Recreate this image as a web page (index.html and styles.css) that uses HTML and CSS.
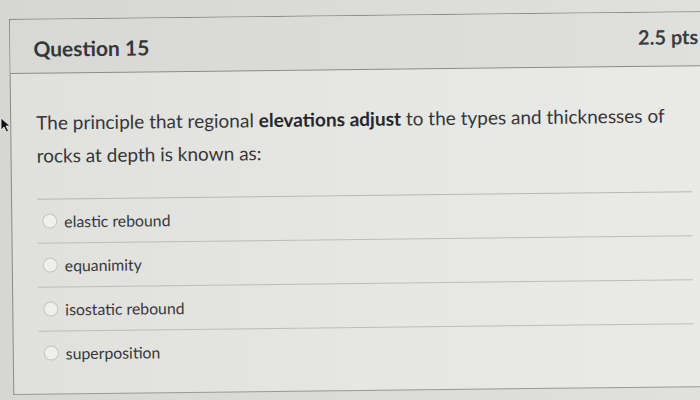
FILE: index.html
```html
<!DOCTYPE html>
<html>
<head>
<meta charset="utf-8">
<link rel="stylesheet" href="styles.css">
</head>
<body>
<div class="card">
  <div class="head">
    <span class="title">Question 15</span>
    <span class="pts">2.5 pts</span>
  </div>
  <div class="body">
    <p class="q">The principle that regional <b>elevations adjust</b> to the types and thicknesses of rocks at depth is known as:</p>
    <ul class="opts">
      <li><span class="radio"></span>elastic rebound</li>
      <li><span class="radio"></span>equanimity</li>
      <li><span class="radio"></span>isostatic rebound</li>
      <li><span class="radio"></span>superposition</li>
    </ul>
  </div>
</div>
<svg class="cursor" width="12" height="16" viewBox="0 0 12 16"><path d="M1 1 L1 13 L4 10 L6.5 15 L8.5 14 L6 9 L10 9 Z" fill="#111" stroke="#eee" stroke-width="0.8"/></svg>
</body>
</html>
```
FILE: styles.css
```css
html, body {
  margin: 0;
  padding: 0;
  width: 700px;
  height: 400px;
  overflow: hidden;
}
body {
  background: linear-gradient(to right, #d6d6d2, #dcdcd8 60%, #e0e0dc);
  font-family: Lato, "Open Sans", sans-serif;
  color: #2e3135;
  position: relative;
}
.card {
  margin: 19px 0 0 9px;
  width: 720px;
  height: 374px;
  border-top: 1px solid #8b8b87;
  border-left: 1px solid #8b8b87;
  border-bottom: 1px solid #9a9a96;
  transform: rotate(-0.65deg);
  transform-origin: top left;
  background: linear-gradient(to right, #e0e0dc, #e6e6e2 50%, #eaeae6);
}
.head {
  height: 53px;
  border-bottom: 1px solid #8b8b87;
  display: flex;
  align-items: center;
  justify-content: space-between;
  padding: 0 32px 0 23px;
  background: linear-gradient(to right, #d8d8d4, #dcdcd8 60%, #e0e0dc);
}
.title {
  font-size: 21px;
  font-weight: 700;
  color: #34373a;
  margin-top: 4px;
}
.pts {
  font-size: 20px;
  font-weight: 700;
  color: #3a3d40;
  margin-top: -6px;
}
.body {
  padding: 32px 0 0 25px;
}
.q {
  margin: 0;
  font-size: 19px;
  line-height: 33px;
  width: 640px;
  color: #33373b;
}
.q b {
  font-weight: 700;
  color: #25282b;
}
.opts {
  list-style: none;
  margin: 27px 0 0 0;
  padding: 0;
  width: 655px;
}
.opts li {
  height: 43px;
  border-top: 1px solid #b8b8b4;
  display: flex;
  align-items: center;
  gap: 7px;
  padding-left: 5px;
  font-size: 15.8px;
  color: #36393c;
}
.opts li + li {
  border-top-color: #bdbdb9;
}
.radio {
  width: 15px;
  height: 15px;
  border-radius: 50%;
  border: 1.5px solid #c4c4c0;
  background: #efefeb;
  box-sizing: border-box;
}
.cursor {
  position: absolute;
  left: 0;
  top: 117px;
}
```
